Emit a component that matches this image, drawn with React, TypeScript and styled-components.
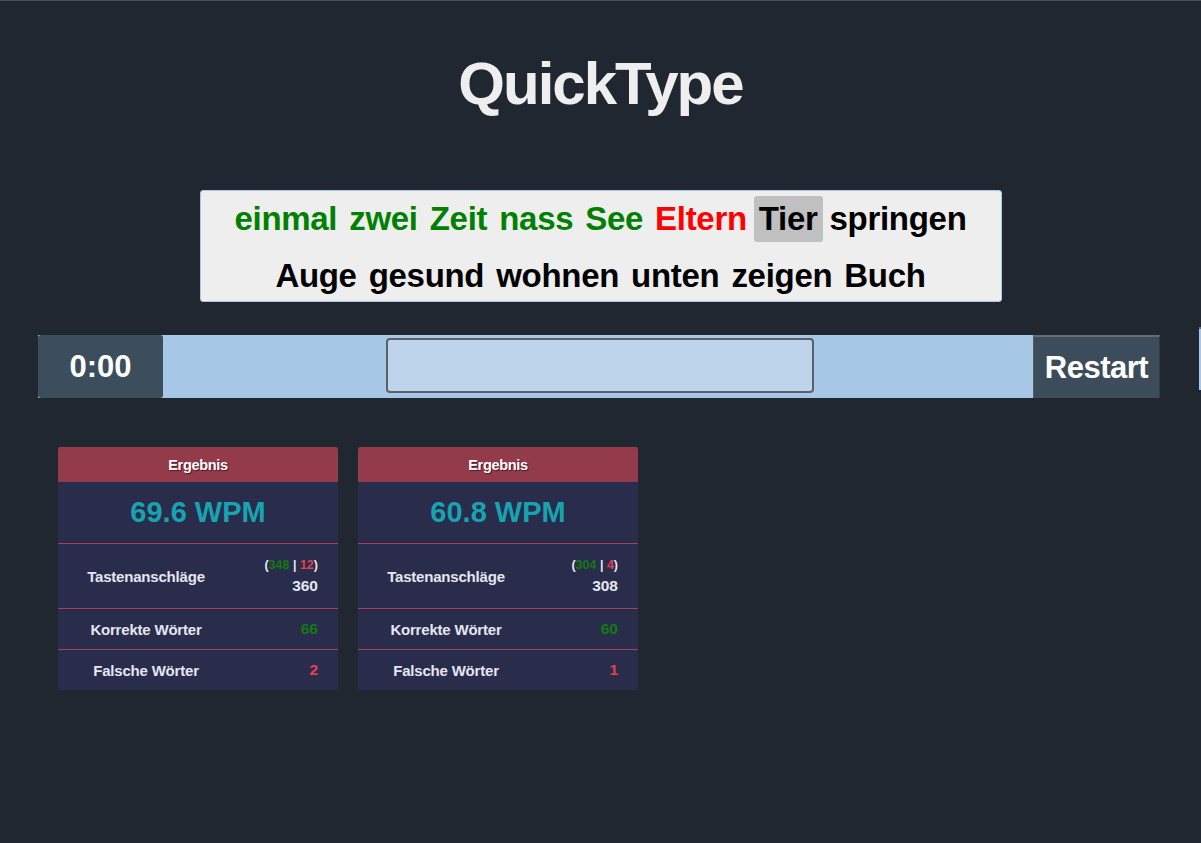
import React from "react";
import styled, { createGlobalStyle } from "styled-components";

const Global = createGlobalStyle`
  html, body { margin: 0; padding: 0; background: #212731; overflow: hidden; }
  body { font-family: "Liberation Sans", Arial, sans-serif; }
`;

const Page = styled.div`
  min-height: 843px;
  box-sizing: border-box;
  border-top: 1px solid #4a4f57;
  background: #212731;
  display: flex;
  flex-direction: column;
`;

const Title = styled.h1`
  margin: 0;
  padding-top: 45px;
  height: 75px;
  text-align: center;
  color: #eeeeee;
  font-size: 60px;
  line-height: 75px;
  font-weight: 700;
  letter-spacing: -2px;
`;

const TextBox = styled.div`
  align-self: center;
  margin-top: 69px;
  width: 802px;
  height: 112px;
  box-sizing: border-box;
  background: #eeeeee;
  border: 1px solid #a9c6e6;
  border-radius: 3px;
  display: flex;
  flex-wrap: wrap;
  justify-content: center;
  align-content: flex-start;
  padding: 5px 20px 0;
`;

const Word = styled.span<{ $state?: "ok" | "bad" | "cur" | "none" }>`
  font-size: 33px;
  font-weight: 700;
  line-height: 46px;
  height: 46px;
  padding: 0 5px;
  margin: 0 1px 11px;
  border-radius: 3px;
  letter-spacing: -0.3px;
  color: ${(p) => (p.$state === "ok" ? "#008000" : p.$state === "bad" ? "#ff0000" : "#000")};
  background: ${(p) => (p.$state === "cur" ? "#c0c0c0" : "transparent")};
`;

const BarRow = styled.div`
  margin: 33px 0 0 38px;
  display: flex;
  align-items: flex-start;
  gap: 39px;
`;

const Bar = styled.div`
  width: 1122px;
  flex-shrink: 0;
  height: 63px;
  display: flex;
  background: #a7c7e7;
`;

const EdgeStrip = styled.div`
  width: 4px;
  flex-shrink: 0;
  height: 63px;
  margin-top: -8px;
  box-sizing: border-box;
  border-top: 2px solid #686d74;
  background: #a7c7e7;
`;

const Timer = styled.div`
  width: 125px;
  background: #3c4d5b;
  border-radius: 3px;
  color: #fff;
  font-size: 31px;
  font-weight: 700;
  display: flex;
  align-items: center;
  justify-content: center;
`;

const InputWrap = styled.div`
  flex: 1;
  display: flex;
  align-items: center;
  justify-content: center;
`;

const Input = styled.input`
  width: 428px;
  height: 55px;
  box-sizing: border-box;
  margin-top: -3px;
  margin-left: 4px;
  background: #bed4ea;
  border: 2px solid #5b6068;
  border-radius: 4px;
  outline: none;
`;

const RestartBtn = styled.button`
  width: 127px;
  background: #3c4c5a;
  border: none;
  border-top: 2px solid #686d74;
  border-left: 1px solid #555b63;
  border-right: 1px solid #2e3a45;
  color: #fff;
  font-family: inherit;
  font-size: 31px;
  font-weight: 700;
  letter-spacing: -0.5px;
  padding: 0;
`;

const Cards = styled.div`
  display: flex;
  gap: 20px;
  margin: 49px 0 0 58px;
`;

const Card = styled.div`
  width: 280px;
  background: #292c4a;
  border-radius: 2px;
  overflow: hidden;
`;

const CardHead = styled.div`
  height: 35px;
  background: #933a4b;
  color: #fff;
  font-size: 14.5px;
  font-weight: 700;
  display: flex;
  align-items: center;
  justify-content: center;
  text-shadow: 1px 1px 1px rgba(0, 0, 0, 0.5);
  letter-spacing: -0.3px;
`;

const Wpm = styled.div`
  height: 62px;
  box-sizing: border-box;
  color: #17a3b1;
  font-size: 29px;
  font-weight: 700;
  display: flex;
  align-items: center;
  justify-content: center;
  border-bottom: 1px solid #a3435b;
`;

const Row = styled.div<{ $h: number }>`
  height: ${(p) => p.$h}px;
  box-sizing: border-box;
  display: flex;
  align-items: center;
  border-bottom: 1px solid #a3435b;
  &:last-child { border-bottom: none; }
`;

const Label = styled.div`
  width: 176px;
  text-align: center;
  color: #e4e6f2;
  font-size: 15px;
  font-weight: 700;
  letter-spacing: -0.2px;
`;

const Value = styled.div<{ $c?: string }>`
  flex: 1;
  text-align: right;
  padding-right: 20px;
  color: ${(p) => p.$c || "#e4e6f2"};
  font-size: 15.5px;
  font-weight: 700;
`;

const Small = styled.div`
  font-size: 12.5px;
  margin-bottom: 5px;
  color: #e4e6f2;
`;

const C = styled.span<{ $c: string }>`
  color: ${(p) => p.$c};
`;

const GREEN = "#127a12";
const RED = "#e2414f";

type Res = { wpm: string; ok: number; bad: number; total: number; cw: number; fw: number };

const results: Res[] = [
  { wpm: "69.6 WPM", ok: 348, bad: 12, total: 360, cw: 66, fw: 2 },
  { wpm: "60.8 WPM", ok: 304, bad: 4, total: 308, cw: 60, fw: 1 },
];

const words: [string, "ok" | "bad" | "cur" | "none"][] = [
  ["einmal", "ok"],
  ["zwei", "ok"],
  ["Zeit", "ok"],
  ["nass", "ok"],
  ["See", "ok"],
  ["Eltern", "bad"],
  ["Tier", "cur"],
  ["springen", "none"],
  ["Auge", "none"],
  ["gesund", "none"],
  ["wohnen", "none"],
  ["unten", "none"],
  ["zeigen", "none"],
  ["Buch", "none"],
];

export default function App() {
  return (
    <Page>
      <Global />
      <Title>QuickType</Title>
      <TextBox>
        {words.map(([w, s], i) => (
          <Word key={i} $state={s}>
            {w}
          </Word>
        ))}
      </TextBox>
      <BarRow>
        <Bar>
          <Timer>0:00</Timer>
          <InputWrap>
            <Input />
          </InputWrap>
          <RestartBtn>Restart</RestartBtn>
        </Bar>
        <EdgeStrip />
      </BarRow>
      <Cards>
        {results.map((r, i) => (
          <Card key={i}>
            <CardHead>Ergebnis</CardHead>
            <Wpm>{r.wpm}</Wpm>
            <Row $h={65}>
              <Label>Tastenanschläge</Label>
              <Value>
                <Small>
                  (<C $c={GREEN}>{r.ok}</C> | <C $c={RED}>{r.bad}</C>)
                </Small>
                {r.total}
              </Value>
            </Row>
            <Row $h={41}>
              <Label>Korrekte Wörter</Label>
              <Value $c={GREEN}>{r.cw}</Value>
            </Row>
            <Row $h={40}>
              <Label>Falsche Wörter</Label>
              <Value $c={RED}>{r.fw}</Value>
            </Row>
          </Card>
        ))}
      </Cards>
    </Page>
  );
}
